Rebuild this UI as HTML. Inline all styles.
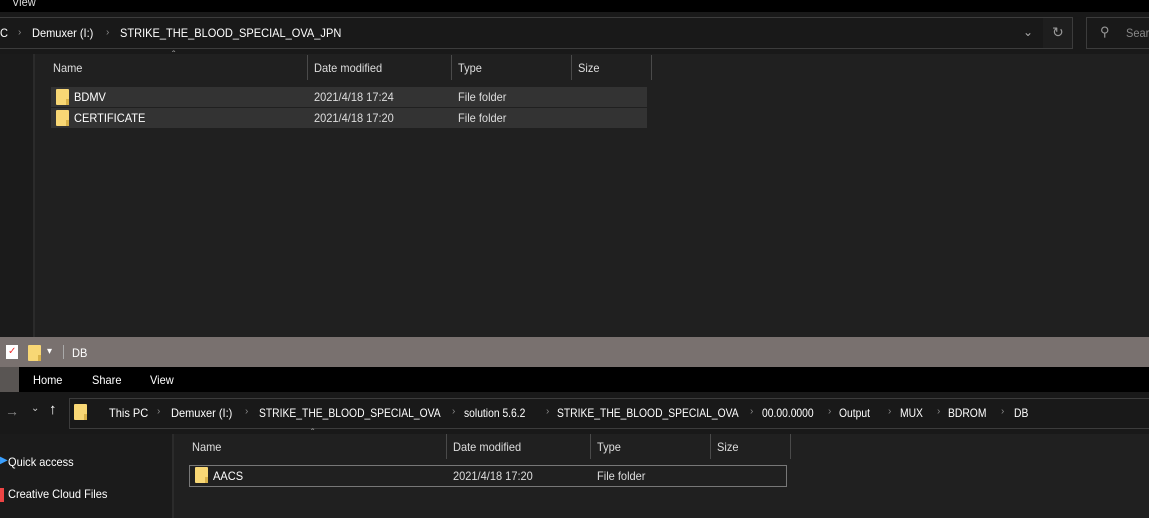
<!DOCTYPE html>
<html><head><meta charset="utf-8"><style>
*{margin:0;padding:0;box-sizing:border-box}
body{width:1149px;height:518px;overflow:hidden;background:#202020;font-family:"Liberation Sans",sans-serif;font-size:12px;color:#fff;position:relative}
div,span{position:absolute}
.t{white-space:nowrap;transform:scaleX(0.92);transform-origin:left center}
.sep{color:#8a8a8a;font-size:10px}
.fold{width:13px;height:16px;background:#f8d775;border-radius:1px}
.fold:after{content:"";position:absolute;right:0;bottom:0;width:3px;height:6px;background:#d9b24a}
.hd{width:1px;background:#4a4a4a}
.g{color:#ddd}
</style></head><body>
<!-- top window -->
<div style="left:0;top:0;width:1149px;height:12px;background:#000"></div>
<div class="t" style="left:12px;top:-5px;color:#ddd">View</div>
<div style="left:0;top:12px;width:1149px;height:42px;background:#191919"></div>
<div style="left:-2px;top:17px;width:1075px;height:32px;border:1px solid #3c3c3c;background:#191919"></div>
<div style="left:1043px;top:18px;width:29px;height:30px;background:#1e1e1e"></div>
<div style="left:1023px;top:25px;color:#aaa;font-size:12px">&#8964;</div>
<div style="left:1052px;top:24px;color:#999;font-size:14px">&#8635;</div>
<div style="left:1086px;top:17px;width:70px;height:32px;border:1px solid #3c3c3c"></div>
<div style="left:1100px;top:24px;color:#999;font-size:13px;transform:scaleX(-1)">&#9906;</div>
<div class="t" style="left:1126px;top:26px;color:#888">Search</div>
<div class="t" style="left:0;top:26px">C</div>
<div class="sep" style="left:18px;top:27px">&#8250;</div>
<div class="t" style="left:32px;top:26px">Demuxer (I:)</div>
<div class="sep" style="left:106px;top:27px">&#8250;</div>
<div class="t" style="left:120px;top:26px">STRIKE_THE_BLOOD_SPECIAL_OVA_JPN</div>
<div style="left:0;top:54px;width:33px;height:283px;background:#1b1b1b"></div>
<div style="left:33px;top:54px;width:2px;height:283px;background:#2b2b2b"></div>
<div style="left:172px;top:50px;color:#aaa;font-size:10px">&#710;</div>
<div class="t g" style="left:53px;top:61px">Name</div>
<div class="hd" style="left:307px;top:55px;height:25px"></div>
<div class="t g" style="left:314px;top:61px">Date modified</div>
<div class="hd" style="left:451px;top:55px;height:25px"></div>
<div class="t g" style="left:458px;top:61px">Type</div>
<div class="hd" style="left:571px;top:55px;height:25px"></div>
<div class="t g" style="left:578px;top:61px">Size</div>
<div class="hd" style="left:651px;top:55px;height:25px"></div>
<div style="left:51px;top:87px;width:596px;height:20px;background:#333"></div>
<div style="left:51px;top:108px;width:596px;height:20px;background:#333"></div>
<div class="fold" style="left:56px;top:89px"></div>
<div class="fold" style="left:56px;top:110px"></div>
<div class="t" style="left:74px;top:90px">BDMV</div>
<div class="t" style="left:74px;top:111px">CERTIFICATE</div>
<div class="t g" style="left:314px;top:90px">2021/4/18 17:24</div>
<div class="t g" style="left:314px;top:111px">2021/4/18 17:20</div>
<div class="t g" style="left:458px;top:90px">File folder</div>
<div class="t g" style="left:458px;top:111px">File folder</div>
<!-- bottom window -->
<div style="left:0;top:337px;width:1149px;height:30px;background:#79716f"></div>
<div style="left:6px;top:345px;width:12px;height:14px;background:#fff"></div>
<div style="left:8px;top:346px;color:#e33;font-size:10px">&#10003;</div>
<div class="fold" style="left:28px;top:345px"></div>
<div style="left:47px;top:346px;font-size:10px;color:#fff">&#9662;</div>
<div style="left:63px;top:345px;width:1px;height:14px;background:#aaa"></div>
<div class="t" style="left:72px;top:346px">DB</div>
<div style="left:0;top:367px;width:1149px;height:25px;background:#000"></div>
<div style="left:0;top:367px;width:19px;height:25px;background:#595553"></div>
<div class="t" style="left:33px;top:373px">Home</div>
<div class="t" style="left:92px;top:373px">Share</div>
<div class="t" style="left:150px;top:373px">View</div>
<div style="left:0;top:392px;width:1149px;height:42px;background:#191919"></div>
<div style="left:5px;top:403px;color:#888;font-size:14px">&#8594;</div>
<div style="left:31px;top:403px;color:#ccc;font-size:10px">&#8964;</div>
<div style="left:49px;top:401px;color:#fff;font-size:15px;font-weight:bold">&#8593;</div>
<div style="left:69px;top:398px;width:1085px;height:31px;border:1px solid #3c3c3c"></div>
<div class="fold" style="left:74px;top:404px"></div>
<div class="t" style="left:109px;top:406px">This PC</div>
<div class="sep" style="left:157px;top:406px">&#8250;</div>
<div class="t" style="left:171px;top:406px">Demuxer (I:)</div>
<div class="sep" style="left:245px;top:406px">&#8250;</div>
<div class="t" style="left:259px;top:406px;transform:scaleX(.86)">STRIKE_THE_BLOOD_SPECIAL_OVA</div>
<div class="sep" style="left:452px;top:406px">&#8250;</div>
<div class="t" style="left:464px;top:406px;transform:scaleX(.86)">solution 5.6.2</div>
<div class="sep" style="left:546px;top:406px">&#8250;</div>
<div class="t" style="left:557px;top:406px;transform:scaleX(.86)">STRIKE_THE_BLOOD_SPECIAL_OVA</div>
<div class="sep" style="left:750px;top:406px">&#8250;</div>
<div class="t" style="left:762px;top:406px;transform:scaleX(.86)">00.00.0000</div>
<div class="sep" style="left:828px;top:406px">&#8250;</div>
<div class="t" style="left:839px;top:406px;transform:scaleX(.86)">Output</div>
<div class="sep" style="left:888px;top:406px">&#8250;</div>
<div class="t" style="left:900px;top:406px;transform:scaleX(.86)">MUX</div>
<div class="sep" style="left:937px;top:406px">&#8250;</div>
<div class="t" style="left:948px;top:406px;transform:scaleX(.86)">BDROM</div>
<div class="sep" style="left:1001px;top:406px">&#8250;</div>
<div class="t" style="left:1014px;top:406px;transform:scaleX(.86)">DB</div>
<div style="left:0;top:434px;width:172px;height:84px;background:#1b1b1b"></div>
<div style="left:172px;top:434px;width:2px;height:84px;background:#2b2b2b"></div>
<div style="left:0;top:455px;color:#3aa0ff;font-size:10px">&#9654;</div>
<div class="t" style="left:8px;top:455px">Quick access</div>
<div style="left:0;top:488px;width:4px;height:14px;background:#e44"></div>
<div class="t" style="left:8px;top:487px">Creative Cloud Files</div>
<div style="left:311px;top:428px;color:#aaa;font-size:10px">&#710;</div>
<div class="t g" style="left:192px;top:440px">Name</div>
<div class="hd" style="left:446px;top:434px;height:25px"></div>
<div class="t g" style="left:453px;top:440px">Date modified</div>
<div class="hd" style="left:590px;top:434px;height:25px"></div>
<div class="t g" style="left:597px;top:440px">Type</div>
<div class="hd" style="left:710px;top:434px;height:25px"></div>
<div class="t g" style="left:717px;top:440px">Size</div>
<div class="hd" style="left:790px;top:434px;height:25px"></div>
<div style="left:189px;top:465px;width:598px;height:22px;border:1px solid #777"></div>
<div class="fold" style="left:195px;top:467px"></div>
<div class="t" style="left:213px;top:469px">AACS</div>
<div class="t g" style="left:453px;top:469px">2021/4/18 17:20</div>
<div class="t g" style="left:597px;top:469px">File folder</div>
</body></html>
